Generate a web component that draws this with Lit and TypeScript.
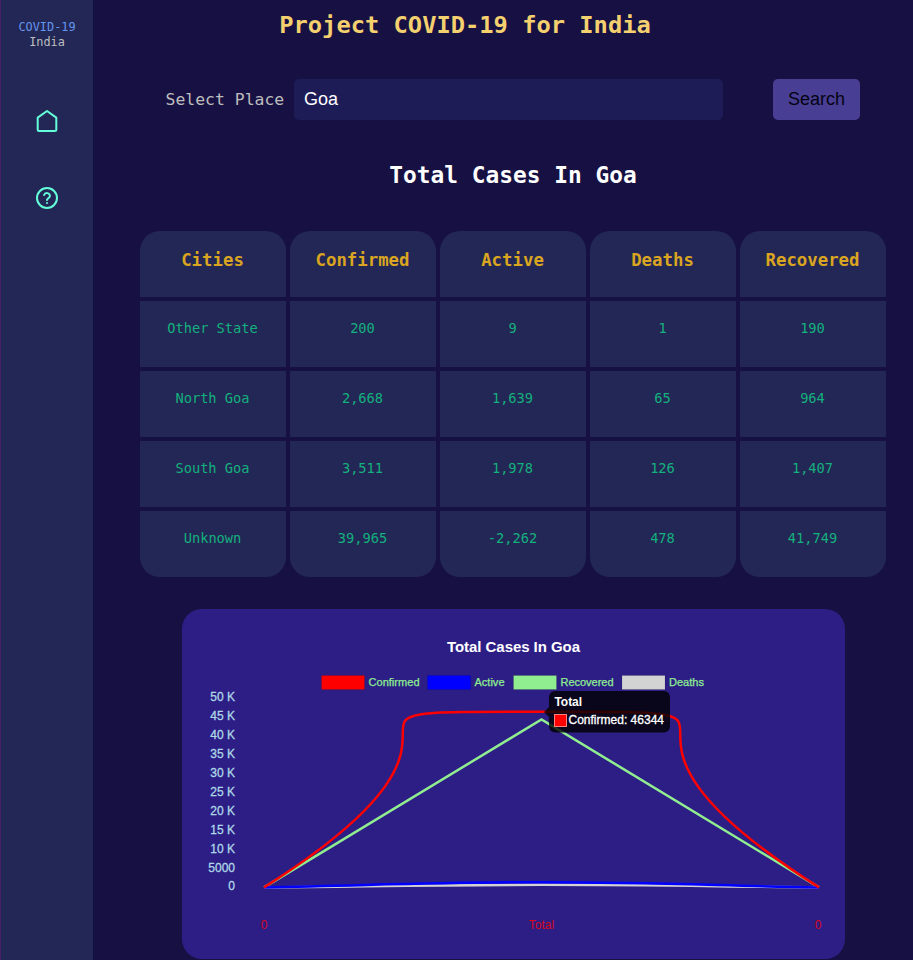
import { LitElement, html, css, svg } from "lit";
import { customElement } from "lit/decorators.js";

const COLUMNS = ["Cities", "Confirmed", "Active", "Deaths", "Recovered"];
const ROWS = [
  ["Other State", "200", "9", "1", "190"],
  ["North Goa", "2,668", "1,639", "65", "964"],
  ["South Goa", "3,511", "1,978", "126", "1,407"],
  ["Unknown", "39,965", "-2,262", "478", "41,749"],
];

// Plot geometry, relative to the chart card.
const LEFT = 82;
const RIGHT = 637;
const MID = (LEFT + RIGHT) / 2;
const BASE = 278.4;
const SCALE = 189.5 / 50000;

/** Three point spline: zero, total, zero. */
function curve(total: number, tension: number): string {
  const top = BASE - total * SCALE;
  const dx = MID - LEFT;
  const dy = top - BASE;
  const t = tension;
  return (
    `M${LEFT} ${BASE}` +
    `C${LEFT + dx * t} ${BASE + dy * t} ${MID - dx * t} ${top} ${MID} ${top}` +
    `C${MID + dx * t} ${top} ${RIGHT - dx * t} ${BASE + dy * t} ${RIGHT} ${BASE}`
  );
}

@customElement("cases-chart")
export class CasesChart extends LitElement {
  static styles = css`
    :host { display: block; width: 663px; height: 350px; border-radius: 20px; background: #2d1e86; overflow: hidden; }
    svg { display: block; font-family: "Liberation Sans", Arial, sans-serif; }
    .title { font-size: 15px; font-weight: bold; fill: #fff; }
    .legend { font-size: 11px; fill: lightgreen; stroke: lightgreen; stroke-width: 0.25; }
    .tick { font-size: 12px; fill: lightblue; stroke: lightblue; stroke-width: 0.3; text-anchor: end; }
    .label { font-size: 12px; fill: #d8061b; text-anchor: middle; }
    .line { fill: none; stroke-width: 2.5; }
    .tip { font-size: 12px; fill: #fff; stroke: #fff; stroke-width: 0.3; }
    .tip-title { font-size: 12px; font-weight: bold; fill: #fff; }
  `;

  render() {
    const legend: [string, string, number, number][] = [
      ["Confirmed", "red", 139.5, 51],
      ["Active", "blue", 245.5, 30],
      ["Recovered", "lightgreen", 331.5, 53],
      ["Deaths", "lightgray", 440, 35],
    ];
    const ticks = ["50 K", "45 K", "40 K", "35 K", "30 K", "25 K", "20 K", "15 K", "10 K", "5000", "0"];
    return html`<svg width="663" height="350" viewBox="0 0 663 350">
      <text class="title" x="265" y="43" textLength="133">Total Cases In Goa</text>
      ${legend.map(
        ([name, color, x, w]) => svg`
          <rect x=${x} y="66.5" width="43" height="14" fill=${color} stroke="rgba(0,0,0,.1)" stroke-width="1"></rect>
          <text class="legend" x=${x + 47} y="77" textLength=${w}>${name}</text>`
      )}
      ${ticks.map((t, i) => svg`<text class="tick" x="53" y=${i === 10 ? 281 : 92 + i * 19}>${t}</text>`)}
      <text class="label" x="82" y="320">0</text>
      <text class="label" x="359.5" y="320">Total</text>
      <text class="label" x="636" y="320">0</text>
      <path class="line" stroke="lightgray" d=${curve(670, 0.4)}></path>
      <path class="line" stroke="lightgreen" d=${curve(44310, 0)}></path>
      <path class="line" stroke="blue" d=${curve(1364, 0.4)}></path>
      <path class="line" stroke="red" d=${curve(46344, 1)}></path>
      <path fill="rgba(0,0,0,.8)" d="M362 103l5-5V88a6 6 0 0 1 6-6h109a6 6 0 0 1 6 6v29.5a6 6 0 0 1-6 6H373a6 6 0 0 1-6-6v-9.5z"></path>
      <text class="tip-title" x="372.5" y="97" textLength="27.5">Total</text>
      <rect x="372.5" y="105.5" width="12" height="12" fill="red" stroke="#ff8080"></rect>
      <text class="tip" x="386.5" y="115" textLength="95.5">Confirmed: 46344</text>
    </svg>`;
  }
}

@customElement("app-root")
export class AppRoot extends LitElement {
  static styles = css`
    :host {
      display: flex; box-sizing: border-box; width: 913px; height: 960px; overflow: hidden;
      background: #171143; font-family: Consolas, "DejaVu Sans Mono", monospace;
    }
    .side {
      box-sizing: border-box; width: 93px; flex: none; background: #232755; border-left: 1px solid #4a2168;
      display: flex; flex-direction: column; align-items: center;
    }
    .brand { margin-top: 20px; font-size: 11.87px; line-height: 15px; color: #bdbdbd; text-align: center; }
    .brand .name { color: #6495ed; }
    .icon { display: block; width: 24px; height: 24px; fill: none; stroke: #64ffda; stroke-width: 2; stroke-linecap: round; stroke-linejoin: round; }
    .home { margin-top: 59px; }
    .help { margin-top: 53px; }
    .main { flex: 1; display: flex; flex-direction: column; align-items: center; padding-left: 20px; }
    h1 { margin: 9px 96px 0 0; font-size: 23.74px; line-height: 32px; color: #f4d06f; white-space: nowrap; }
    .form { display: flex; align-items: center; height: 41px; margin-top: 38px; width: 695px; }
    .form label { font-size: 16.44px; width: 128.5px; color: #bdbdbd; white-space: nowrap; }
    .form input, .form button { box-sizing: border-box; height: 41px; border: 0; border-radius: 5px; font: 18px "Liberation Sans", Arial, sans-serif; }
    .form input { width: 429px; padding: 0 10px; color: #fff; background: #1e1c56; }
    .form button { width: 87px; margin-left: 50px; padding: 0; color: #050311; background: #483f95; }
    h2 { margin: 40px 0 0; font-size: 22.83px; line-height: 30px; color: #fff; white-space: nowrap; }
    .grid { display: grid; grid-template-columns: repeat(5, 146px); grid-auto-rows: 66px; gap: 4px; margin-top: 41px; }
    .cell { box-sizing: border-box; padding: 17px 1px 0 0; background: #232755; color: #14b07d; font-size: 13.7px; line-height: 20px; text-align: center; }
    .head { padding-top: 18px; color: #daa520; font-size: 17.35px; line-height: 23px; font-weight: bold; border-radius: 20px 20px 0 0; }
    .last { border-radius: 0 0 20px 20px; }
    cases-chart { flex: none; margin-top: 32px; }
  `;

  render() {
    return html`
      <nav class="side">
        <div class="brand"><div class="name">COVID-19</div><div>India</div></div>
        <svg class="icon home" viewBox="0 0 24 24"><path d="M2.7 8.600 12 2l9.300 6.600V20.500a1.500 1.500 0 0 1-1.500 1.500H4.200a1.500 1.500 0 0 1-1.500-1.500z"></path></svg>
        <svg class="icon help" viewBox="0 0 24 24">
          <circle cx="12" cy="12" r="10"></circle>
          <path d="M9.1 9a3 3 0 0 1 5.8 1c0 2-2.9 2.4-2.9 4M12 17h.01"></path>
        </svg>
      </nav>
      <main class="main">
        <h1>Project COVID-19 for India</h1>
        <div class="form">
          <label for="place">Select Place</label>
          <input id="place" value="Goa" />
          <button>Search</button>
        </div>
        <h2>Total Cases In Goa</h2>
        <div class="grid">
          ${COLUMNS.map((c) => html`<div class="cell head">${c}</div>`)}
          ${ROWS.map((row, i) =>
            row.map((v) => html`<div class="cell ${i === ROWS.length - 1 ? "last" : ""}">${v}</div>`)
          )}
        </div>
        <cases-chart></cases-chart>
      </main>
    `;
  }
}
